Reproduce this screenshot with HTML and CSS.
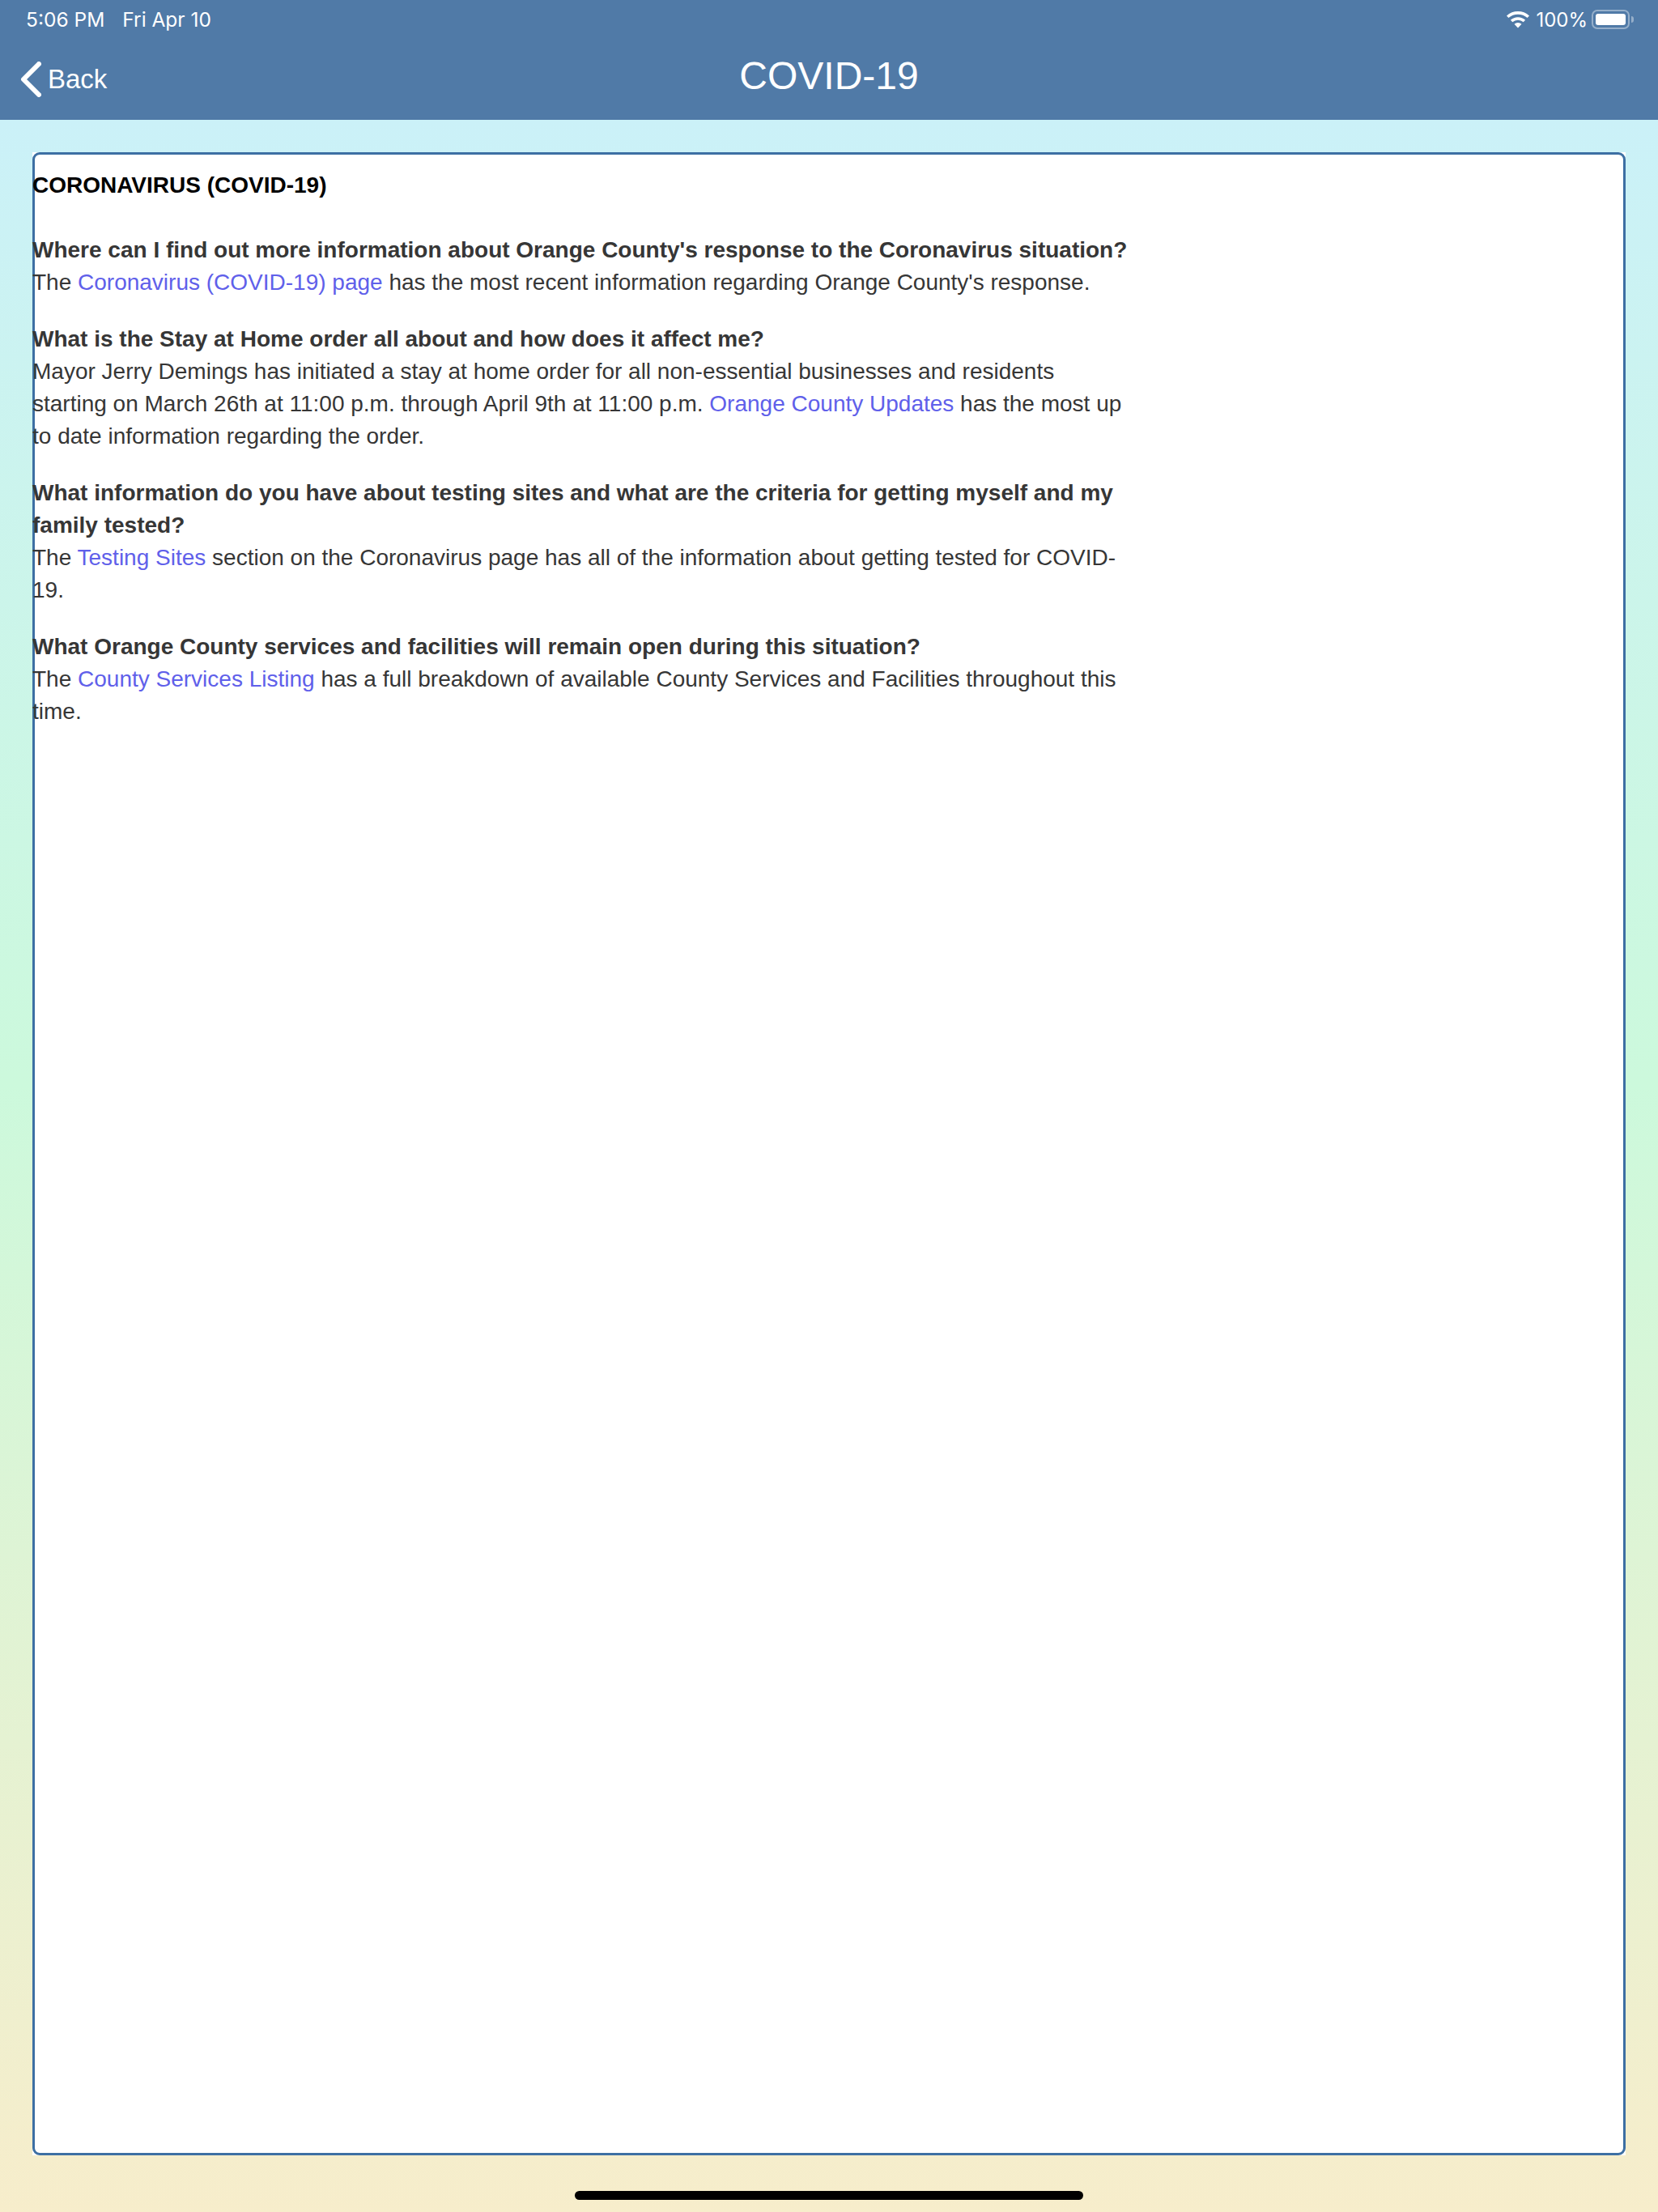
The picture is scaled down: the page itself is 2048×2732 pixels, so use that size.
FILE: index.html
```html
<!DOCTYPE html>
<html lang="en">
<head>
<meta charset="utf-8">
<title>COVID-19</title>
<link rel="stylesheet" href="styles.css">
</head>
<body>
<div class="app">
  <header class="header">
    <div class="status">
      <div class="status-left"><span>5:06 PM</span><span>Fri Apr 10</span></div>
      <div class="status-right">
        <svg class="wifi" width="28" height="21" viewBox="0 0 28 21"><path d="M14 20.5 9.5 15.7A6.6 6.6 0 0 1 18.5 15.7Z" fill="#fff"/><path d="M4.9 10.7A13.5 13.5 0 0 1 23.1 10.7L20.7 13.3A10 10 0 0 0 7.3 13.3Z" fill="#fff"/><path d="M0 5.4A21 21 0 0 1 28 5.4L25.6 8A17.6 17.6 0 0 0 2.4 8Z" fill="#fff"/></svg>
        <span class="pct">100%</span>
        <div class="battery"><div class="battery-fill"></div></div>
        <div class="battery-cap"></div>
      </div>
    </div>
    <nav class="nav">
      <div class="back">
        <svg width="26" height="44" viewBox="0 0 26 44"><path d="M23 3 4 22l19 19" fill="none" stroke="#fff" stroke-width="6" stroke-linecap="round" stroke-linejoin="round"/></svg>
        <span>Back</span>
      </div>
      <h1 class="title">COVID-19</h1>
    </nav>
  </header>
  <main class="main">
    <article class="card">
      <div class="frame">
        <div class="content">
          <h2 class="page-title">CORONAVIRUS (COVID-19)</h2>
          <p class="qa"><strong>Where can I find out more information about Orange County's response to the Coronavirus situation?</strong><br>The <a href="#">Coronavirus (COVID-19) page</a> has the most recent information regarding Orange County's response.</p>
          <p class="qa"><strong>What is the Stay at Home order all about and how does it affect me?</strong><br>Mayor Jerry Demings has initiated a stay at home order for all non-essential businesses and residents starting on March 26th at 11:00 p.m. through April 9th at 11:00 p.m. <a href="#">Orange County Updates</a> has the most up to date information regarding the order.</p>
          <p class="qa"><strong>What information do you have about testing sites and what are the criteria for getting myself and my family tested?</strong><br>The <a href="#">Testing Sites</a> section on the Coronavirus page has all of the information about getting tested for COVID-19.</p>
          <p class="qa"><strong>What Orange County services and facilities will remain open during this situation?</strong><br>The <a href="#">County Services Listing</a> has a full breakdown of available County Services and Facilities throughout this time.</p>
        </div>
      </div>
    </article>
  </main>
  <div class="home-indicator"></div>
</div>
</body>
</html>
```
FILE: styles.css
```css
* { box-sizing: border-box; }
html, body { margin: 0; padding: 0; }
body { font-family: "Liberation Sans", Arial, sans-serif; }
.app { position: relative; width: 2048px; height: 2732px; display: flex; flex-direction: column; overflow: hidden; }
.header { height: 148px; background: #507aa7; color: #fff; flex: none; display: flex; flex-direction: column; }
.status { height: 48px; padding: 0 32px; display: flex; justify-content: space-between; align-items: center; font-family: Inter, "Liberation Sans", sans-serif; font-size: 24px; }
.status-left { display: flex; gap: 22px; font-size: 24.5px; }
.status-right { display: flex; align-items: center; margin-right: -2px; }
.wifi { margin-right: 8px; }
.pct { margin-right: 5px; }
.battery { width: 47px; height: 24px; border: 2px solid rgba(255,255,255,.4); border-radius: 7px; padding: 3px; }
.battery-fill { width: 100%; height: 100%; background: #fff; border-radius: 3px; }
.battery-cap { width: 3px; height: 8px; margin-left: 2px; background: rgba(255,255,255,.4); border-radius: 0 3px 3px 0; }
.nav { flex: 1; position: relative; display: flex; align-items: center; justify-content: center; }
.back { position: absolute; left: 25px; top: 28px; display: flex; align-items: center; gap: 8px; font-size: 33px; line-height: 44px; }
.title { margin: -10px 0 0; font-weight: 400; font-size: 48px; }
.main { flex: 1; padding: 40px 40px 70px; background: linear-gradient(180deg, #cbf1f8 0%, #ccf9dc 46%, #f7edcb 100%); display: flex; }
.card { flex: 1; display: flex; background: #fff; }
.frame { flex: 1; border: 3px solid #3d6fa3; border-radius: 9px; }
.content { width: 1358px; margin-left: -3px; padding-top: 18px; font-size: 28px; line-height: 40px; color: #363636; }
.page-title { margin: 0; font-size: 28px; line-height: 40px; font-weight: 700; color: #000; }
.qa { margin: 0; padding-top: 30px; }
.page-title + .qa { padding-top: 40px; }
.content a { color: #6060ea; text-decoration: none; }
.home-indicator { position: absolute; left: 710px; top: 2706px; width: 628px; height: 11px; border-radius: 6px; background: #000; }
```
